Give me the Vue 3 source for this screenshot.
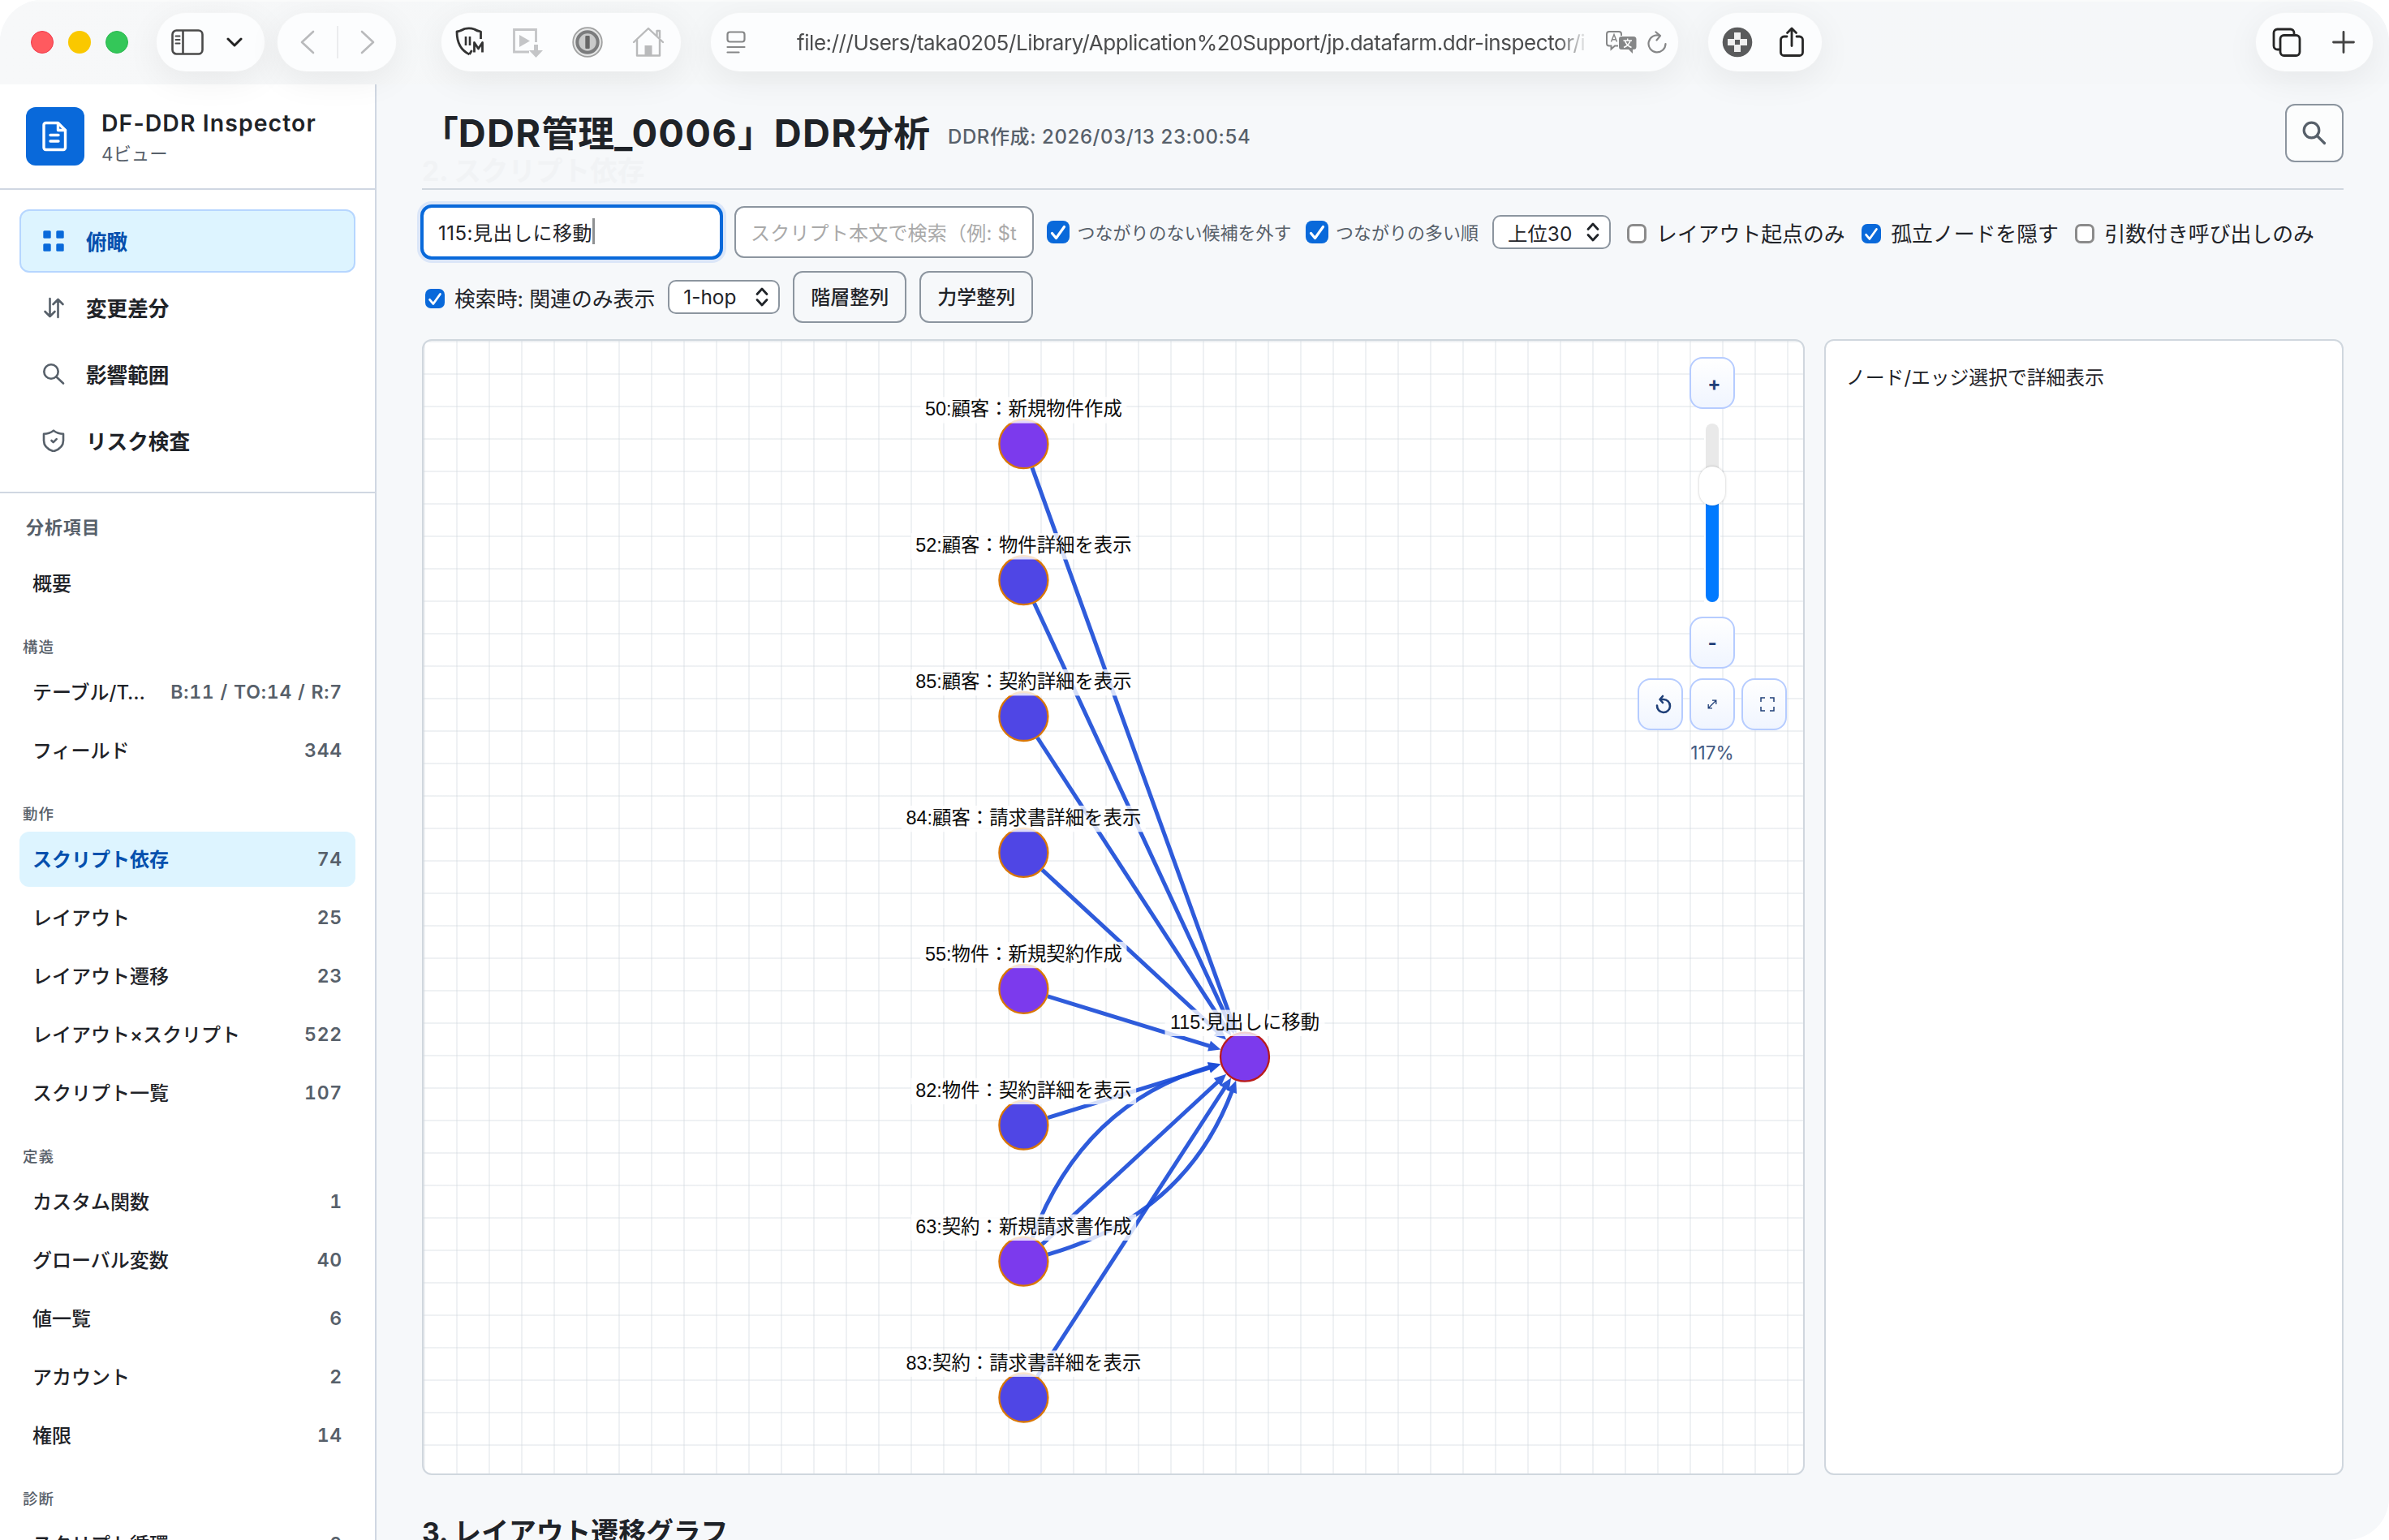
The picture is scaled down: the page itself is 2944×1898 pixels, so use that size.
<script setup>
const views = [
  { name: '俯瞰', icon: 'grid', active: true },
  { name: '変更差分', icon: 'diff' },
  { name: '影響範囲', icon: 'search' },
  { name: 'リスク検査', icon: 'shield' },
]

const groups = [
  { title: '', items: [{ name: '概要', count: '' }] },
  {
    title: '構造',
    items: [
      { name: 'テーブル/T…', count: 'B:11 / TO:14 / R:7' },
      { name: 'フィールド', count: '344' },
    ],
  },
  {
    title: '動作',
    items: [
      { name: 'スクリプト依存', count: '74', active: true },
      { name: 'レイアウト', count: '25' },
      { name: 'レイアウト遷移', count: '23' },
      { name: 'レイアウト×スクリプト', count: '522' },
      { name: 'スクリプト一覧', count: '107' },
    ],
  },
  {
    title: '定義',
    items: [
      { name: 'カスタム関数', count: '1' },
      { name: 'グローバル変数', count: '40' },
      { name: '値一覧', count: '6' },
      { name: 'アカウント', count: '2' },
      { name: '権限', count: '14' },
    ],
  },
  { title: '診断', items: [{ name: 'スクリプト循環', count: '0' }] },
]

// Graph coordinates are relative to the inner corner of the canvas panel.
const NAVY = '#4f46e5'
const VIOLET = '#7c3aed'
const R = 30
const FONT = 23.4
const target = { x: 1012, y: 882.6, label: '115:見出しに移動', fill: VIOLET, stroke: '#b91c1c' }
const callers = [
  ['50:顧客：新規物件作成', VIOLET],
  ['52:顧客：物件詳細を表示', NAVY],
  ['85:顧客：契約詳細を表示', NAVY],
  ['84:顧客：請求書詳細を表示', NAVY],
  ['55:物件：新規契約作成', VIOLET],
  ['82:物件：契約詳細を表示', NAVY],
  ['63:契約：新規請求書作成', VIOLET],
  ['83:契約：請求書詳細を表示', NAVY],
].map(([label, fill], i) => ({ x: 739.4, y: 127.2 + i * 167.9, label, fill, stroke: '#d97706' }))
const nodes = [...callers, target]

function labelWidth(text) {
  let w = 0
  for (const c of text) w += c === ':' ? 0.278 : /\d/.test(c) ? 0.556 : 1
  return w * FONT + 11
}

function toward(from, to, dist) {
  const dx = to.x - from.x
  const dy = to.y - from.y
  const len = Math.hypot(dx, dy)
  return { x: from.x + (dx / len) * dist, y: from.y + (dy / len) * dist }
}

function makeEdge(source, bend) {
  const dx = target.x - source.x
  const dy = target.y - source.y
  const len = Math.hypot(dx, dy)
  const c = {
    x: (source.x + target.x) / 2 + (dy / len) * bend,
    y: (source.y + target.y) / 2 - (dx / len) * bend,
  }
  const a = toward(source, c, R + 1)
  const tip = toward(target, c, R + 1)
  const back = toward(target, c, R + 14)
  const base = toward(target, c, R + 16)
  const nx = ((tip.y - base.y) / 15) * 6.6
  const ny = (-(tip.x - base.x) / 15) * 6.6
  return {
    d: `M${a.x} ${a.y}Q${c.x} ${c.y} ${back.x} ${back.y}`,
    head: `${tip.x},${tip.y} ${base.x + nx},${base.y + ny} ${base.x - nx},${base.y - ny}`,
  }
}

const edges = callers.map((n) => makeEdge(n, 0))
edges.push(makeEdge(callers[6], 93.6), makeEdge(callers[6], -93.6))
</script>

<template>
  <div class="window">
    <header class="chrome">
      <div class="lights"><i class="red"></i><i class="yellow"></i><i class="green"></i></div>

      <div class="pill p-side">
        <svg width="40" height="32" viewBox="0 0 40 32" fill="none" stroke="#4a4a4a" stroke-width="2.6">
          <rect x="1.5" y="1.5" width="37" height="29" rx="5" /><path d="M14.5 2v28" />
          <path d="M5.5 8.500h5M5.500 13h5M5.500 17.500h5" stroke-width="2" stroke-linecap="round" />
        </svg>
        <svg width="20" height="12" viewBox="0 0 20 12" fill="none" stroke="#222" stroke-width="3" stroke-linecap="round" stroke-linejoin="round"><path d="M2 2l8 8 8-8" /></svg>
      </div>

      <div class="pill p-nav">
        <svg width="18" height="30" viewBox="0 0 18 30" fill="none" stroke="#b9babc" stroke-width="2.6" stroke-linecap="round" stroke-linejoin="round"><path d="M16 2L2 15l14 13" /></svg>
        <i class="split"></i>
        <svg width="18" height="30" viewBox="0 0 18 30" fill="none" stroke="#b9babc" stroke-width="2.6" stroke-linecap="round" stroke-linejoin="round"><path d="M2 2l14 13L2 28" /></svg>
      </div>

      <div class="pill p-ext">
        <svg width="36" height="38" viewBox="0 0 36 38" fill="none" stroke="#333" stroke-width="2.8" stroke-linejoin="round">
          <path d="M17.500 34C9 30 2 21 2 6C5.500 5.500 9.500 3.500 11.500 2.500C15.500 1.500 19.500 1.500 23.500 3C26.500 5 29 5.500 31.500 6V15" />
          <path d="M13 12v11M18 12v11" stroke-width="2.600" />
          <path d="M17.500 34l3-5" /><path d="M23.500 31.500V19.500l5 7.500 5-7.500v12" stroke-width="2.800" />
        </svg>
        <svg width="40" height="38" viewBox="0 0 40 38" fill="none" stroke="#c4c5c7" stroke-width="2.8">
          <path d="M21 31H2.500V3.500h27V19" /><path d="M9 10v15l13-7.500z" fill="#c4c5c7" stroke="none" />
          <path d="M29.500 22v10" stroke-width="5" /><path d="M21 29h17L29.500 38z" fill="#c4c5c7" stroke="none" />
        </svg>
        <svg width="38" height="38" viewBox="0 0 38 38">
          <circle cx="19" cy="19" r="17.800" fill="#e4e5e5" stroke="#a0a1a1" stroke-width="1.800" />
          <circle cx="19" cy="19" r="12.700" fill="#c9caca" stroke="#7b7c7d" stroke-width="4" />
          <rect x="16.300" y="11" width="5.400" height="16" rx="1" fill="#666" />
        </svg>
        <svg class="home" width="40" height="38" viewBox="0 0 40 38" fill="none" stroke="#b9babb" stroke-width="2.400" stroke-linejoin="round">
          <path d="M2 19L20 2l18 17" stroke-linecap="round" /><path d="M6 16v19.500h28V16M34 14V5h-3.500v6" />
          <rect x="15.500" y="23" width="9" height="12" fill="#b9babb" stroke="none" />
        </svg>
      </div>

      <div class="pill p-url">
        <svg width="24" height="28" viewBox="0 0 24 28" fill="none" stroke="#868788" stroke-width="2.200" stroke-linecap="round">
          <rect x="1.500" y="1.500" width="21" height="12" rx="3" /><path d="M1.500 20h21M1.500 26.500h14" />
        </svg>
        <span class="url">file:///Users/taka0205/Library/Application%20Support/jp.datafarm.ddr-inspector/i</span>
        <svg class="translate" width="40" height="28" viewBox="0 0 40 28" fill="none" stroke="#858687" stroke-width="2">
          <path d="M16 18.500h-4l-4.500 4v-4H5a3 3 0 0 1-3-3V4a3 3 0 0 1 3-3h12a3 3 0 0 1 3 3v2" />
          <path d="M7.500 13.500L11 4.500l3.500 9M8.700 10.700h4.600" stroke-width="1.500" />
          <path d="M20 7h15a3.500 3.500 0 0 1 3.500 3.500v9A3.500 3.500 0 0 1 35 23h-1v5l-5-5h-9a3 3 0 0 1-3-3V10a3 3 0 0 1 3-3z" fill="#858687" stroke="none" />
          <path d="M22.500 12h10.500M27.700 9.500v2.500M31 12c-1 4-4 7-8 8.500M24.500 12c1 4 4 7 8 8.500" stroke="#fff" stroke-width="1.500" />
        </svg>
        <svg width="24" height="28" viewBox="0 0 24 28" fill="none" stroke="#858687" stroke-width="2.200" stroke-linecap="round" stroke-linejoin="round">
          <path d="M22.500 16A10.500 10.500 0 1 1 15 5.800" /><path d="M10.500 1.500l5.500 4.600-4.500 5.400" />
        </svg>
      </div>

      <div class="pill p-share">
        <svg width="38" height="38" viewBox="0 0 38 38">
          <circle cx="19" cy="19" r="18.300" fill="#5a5b5c" />
          <path d="M15 7h8v8h8v8h-8v8h-8v-8H7v-8h8z" fill="#efefef" /><rect x="16" y="16" width="6" height="6" fill="#5a5b5c" />
        </svg>
        <svg width="32" height="38" viewBox="0 0 32 38" fill="none" stroke="#262626" stroke-width="2.800" stroke-linecap="round" stroke-linejoin="round">
          <path d="M10 12H6.500a4 4 0 0 0-4 4v15.500a4 4 0 0 0 4 4h19a4 4 0 0 0 4-4V16a4 4 0 0 0-4-4H22M16 23.500V2.500M10.500 7.500L16 2l5.500 5.500" />
        </svg>
      </div>

      <div class="pill p-tabs">
        <svg width="36" height="36" viewBox="0 0 36 36" fill="none" stroke="#262626" stroke-width="2.800">
          <path d="M9.500 27H6.500a4.500 4.500 0 0 1-4.500-4.500V6.500A4.500 4.500 0 0 1 6.500 2h16a4.500 4.500 0 0 1 4.500 4.500V9" />
          <rect x="10" y="9.500" width="24" height="25" rx="4.500" />
        </svg>
        <svg width="28" height="28" viewBox="0 0 28 28" stroke="#444" stroke-width="2.800" stroke-linecap="round"><path d="M14 1.500v25M1.500 14h25" /></svg>
      </div>
    </header>

    <div class="body">
      <aside class="sidebar">
        <div class="brand">
          <div class="logo">
            <svg width="32" height="38" viewBox="0 0 32 38" fill="none" stroke="#fff" stroke-width="3.400" stroke-linecap="round" stroke-linejoin="round">
              <path d="M4.500 2.500h15l9 9V33a2.500 2.500 0 0 1-2.500 2.500H4.500A2.500 2.500 0 0 1 2 33V5a2.500 2.500 0 0 1 2.500-2.500z" />
              <path d="M19.500 3v8.500h9" /><path d="M10 17.500h10M10 25h10" />
            </svg>
          </div>
          <div class="brand-text">
            <div class="brand-name">DF-DDR Inspector</div>
            <div class="brand-sub">4ビュー</div>
          </div>
        </div>

        <nav class="views">
          <div v-for="v in views" :key="v.name" class="view" :class="{ active: v.active }">
            <svg width="28" height="28" viewBox="0 0 28 28" fill="none" stroke="#57606a" stroke-width="2.600" stroke-linecap="round" stroke-linejoin="round">
              <g v-if="v.icon === 'grid'" fill="#0969da" stroke="none">
                <rect x="1.300" y="1.300" width="9.400" height="9.400" rx="1.500" /><rect x="17.300" y="1.300" width="9.400" height="9.400" rx="1.500" />
                <rect x="1.300" y="17.300" width="9.400" height="9.400" rx="1.500" /><rect x="17.300" y="17.300" width="9.400" height="9.400" rx="1.500" />
              </g>
              <path v-else-if="v.icon === 'diff'" d="M9.500 3v22M3.500 19l6 6 6-6M19.500 26V4M13.500 10l6-6 6 6" />
              <g v-else-if="v.icon === 'search'"><circle cx="11" cy="11" r="8.700" /><path d="M17.500 17.500l8.500 8" /></g>
              <g v-else><path d="M14 1.700c4 3 8 4 12 4V14c0 6.500-5 11-12 13.200C7 25 2 20.500 2 14V5.700c4 0 8-1 12-4z" /><path d="M11.500 14l2.200 2.200 4-4" /></g>
            </svg>
            <span>{{ v.name }}</span>
          </div>
        </nav>

        <div class="toc">
          <div class="toc-title">分析項目</div>
          <section v-for="g in groups" :key="g.title">
            <div v-if="g.title" class="group-title">{{ g.title }}</div>
            <div class="rows">
              <div v-for="it in g.items" :key="it.name" class="row" :class="{ active: it.active }">
                <span>{{ it.name }}</span><b>{{ it.count }}</b>
              </div>
            </div>
          </section>
        </div>
      </aside>

      <main class="main">
        <div class="page-head">
          <div class="ghost">2. スクリプト依存</div>
          <h1>「<span>DDR</span>管理<span>_0006</span>」<span>DDR</span>分析</h1>
          <div class="stamp">DDR作成: 2026/03/13 23:00:54</div>
          <div class="find">
            <svg width="30" height="30" viewBox="0 0 30 30" fill="none" stroke="#57606a" stroke-width="3.200" stroke-linecap="round"><circle cx="11.500" cy="11.500" r="9.300" /><path d="M18.500 18.500l9 9" /></svg>
          </div>
        </div>

        <div class="tools">
          <div class="line">
            <div class="field focus">115:見出しに移動<i class="caret"></i></div>
            <div class="field hint"><span>スクリプト本文で検索（例: $t</span></div>
            <label class="opt muted"><i class="check big on"><svg viewBox="0 0 28 28"><path d="M6.500 15.500l5 6L21.500 7.500" /></svg></i><span>つながりのない候補を外す</span></label>
            <label class="opt muted"><i class="check big on"><svg viewBox="0 0 28 28"><path d="M6.500 15.500l5 6L21.500 7.500" /></svg></i><span>つながりの多い順</span></label>
            <div class="select">上位30<svg width="16" height="24" viewBox="0 0 16 24"><path d="M2 8.500L8 2l6 6.500M2 15.500L8 22l6-6.500" /></svg></div>
            <label class="opt gap-a"><i class="check"></i>レイアウト起点のみ</label>
            <label class="opt gap-b"><i class="check on"><svg viewBox="0 0 28 28"><path d="M6.500 15.500l5 6L21.500 7.500" /></svg></i>孤立ノードを隠す</label>
            <label class="opt gap-b"><i class="check"></i>引数付き呼び出しのみ</label>
          </div>
          <div class="line">
            <label class="opt first"><i class="check on"><svg viewBox="0 0 28 28"><path d="M6.500 15.500l5 6L21.500 7.500" /></svg></i>検索時: 関連のみ表示</label>
            <div class="select hop">1-hop<svg width="16" height="24" viewBox="0 0 16 24"><path d="M2 8.500L8 2l6 6.500M2 15.500L8 22l6-6.500" /></svg></div>
            <div class="btn">階層整列</div>
            <div class="btn">力学整列</div>
          </div>
        </div>

        <div class="panels">
          <div class="canvas">
            <svg class="graph" width="1700" height="1396" viewBox="0 0 1700 1396">
              <g v-for="(e, i) in edges" :key="'e' + i" opacity="0.92">
                <path :d="e.d" fill="none" stroke="#1d4ed8" stroke-width="5" />
                <polygon :points="e.head" fill="#1d4ed8" />
              </g>
              <g v-for="n in nodes" :key="n.label">
                <circle :cx="n.x" :cy="n.y" :r="R" :fill="n.fill" :stroke="n.stroke" stroke-width="2.300" />
                <rect :x="n.x - labelWidth(n.label) / 2" :y="n.y - 58" :width="labelWidth(n.label)" height="32.400" fill="#fff" fill-opacity="0.8" />
                <text class="node-label" :x="n.x" :y="n.y - 35" text-anchor="middle">{{ n.label }}</text>
              </g>
            </svg>

            <div class="zoom">
              <div class="zbtn plus">+</div>
              <div class="slider"><i class="rail"></i><i class="fill"></i><i class="thumb"></i></div>
              <div class="zbtn">-</div>
              <div class="zrow">
                <div class="zbtn shift">
                  <svg width="20" height="24" viewBox="0 0 20 24" fill="none" stroke="#1f3f78" stroke-width="2.600" stroke-linecap="round" stroke-linejoin="round"><path d="M2 13.500A8 8 0 1 0 10 6H6M9 2L5.500 6 9 10" /></svg>
                </div>
                <div class="zbtn">
                  <svg width="12" height="12" viewBox="0 0 12 12" fill="none" stroke="#1f3f78" stroke-width="1.300"><path d="M1.500 10.500l9-9M6 1.200h4.800V6M1.200 6v4.800H6" /></svg>
                </div>
                <div class="zbtn shift">
                  <svg width="18" height="18" viewBox="0 0 18 18" fill="none" stroke="#1f3f78" stroke-width="1.500"><path d="M1 6V1h5M12 1h5v5M17 12v5h-5M6 17H1v-5" /></svg>
                </div>
              </div>
              <div class="percent">117%</div>
            </div>
          </div>
          <div class="detail">ノード/エッジ選択で詳細表示</div>
        </div>

        <h2>3. レイアウト遷移グラフ</h2>
      </main>
    </div>
  </div>
</template>

<style>
body { margin: 0; background: #fff; overflow: hidden; }
</style>

<style scoped>
* { box-sizing: border-box; }
i { font-style: normal; }
svg { display: block; flex: none; }
.window {
  width: 2944px; height: 1898px; overflow: hidden; display: flex; flex-direction: column;
  border-radius: 52px 52px 52px 0; background: #f6f8fa; color: #1f2328;
  font-family: Inter, "Noto Sans CJK JP", sans-serif; font-size: 24px; white-space: nowrap;
}

/* browser toolbar */
.chrome {
  flex: none; height: 104px; display: flex; align-items: center; position: relative; z-index: 2;
  background: linear-gradient(90deg, #f7f8f9 0%, #f5f7f8 30%, #f5f7f9 100%); padding: 0 20px 0 38px;
  box-shadow: inset 0 2px 0 #fafbfb;
}
.lights { display: flex; gap: 18px; margin-right: 35px; }
.lights i { width: 28px; height: 28px; border-radius: 50%; }
.red { background: #ff5a5f; border: 1.500px solid #f0384a; }
.yellow { background: #fac800; }
.green { background: #34c759; border: 1px solid #2cb851; }
.pill {
  height: 72px; border-radius: 36px; background: #fcfdfe; display: flex; align-items: center; flex: none;
  box-shadow: 0 10px 44px rgba(0, 0, 0, 0.065), 0 0 2px rgba(255, 255, 255, 0.9);
}
.p-side { width: 133px; padding-left: 18px; gap: 28px; margin-right: 16px; }
.p-nav { width: 146px; padding-left: 28px; gap: 27px; margin-right: 56px; }
.split { width: 2px; height: 40px; background: #ebecee; }
.p-ext { width: 295px; padding-left: 17px; gap: 34px; margin-right: 37px; }
.home { margin-left: 2px; }
.p-url { width: 1192px; padding-left: 19px; margin-right: 37px; }
.url {
  margin-left: 63px; width: 976px; overflow: hidden; color: #4b4c4d; font-size: 26px; letter-spacing: -0.440px; line-height: 40px; padding-top: 1px;
  -webkit-mask-image: linear-gradient(90deg, #000 96%, transparent 100%); mask-image: linear-gradient(90deg, #000 96%, transparent 100%);
}
.translate { margin: 0 12px 0 20px; }
.p-share { width: 140px; padding-left: 17px; gap: 32px; margin-right: auto; }
.p-tabs { width: 144px; padding-left: 20px; gap: 38px; }

.body { flex: 1; display: flex; min-height: 0; }

/* sidebar */
.sidebar { width: 464px; flex: none; background: #fff; border-right: 2px solid #d0d7e2; height: 1794px; overflow: hidden; }
.brand { height: 130px; border-bottom: 2px solid #d0d7e2; display: flex; align-items: center; padding: 0 0 1px 32px; gap: 21px; }
.logo { width: 72px; height: 72px; border-radius: 12px; background: #0969da; display: flex; align-items: center; justify-content: center; }
.brand-text { padding-top: 3px; }
.brand-name { font-size: 28.400px; font-weight: 600; line-height: 38px; letter-spacing: 1.100px; }
.brand-sub { font-size: 22.400px; color: #57606a; line-height: 32px; margin-top: 3px; }
.views { padding: 24px; display: flex; flex-direction: column; gap: 4px; border-bottom: 2px solid #d0d7e2; }
.view { height: 78px; border: 2px solid transparent; border-radius: 12px; display: flex; align-items: center; gap: 26px; padding-left: 26px; font-size: 25.600px; font-weight: 600; }
.view span { padding-bottom: 2px; }
.view.active { background: #ddf4ff; border-color: #b6d6ff; color: #0550ae; }
.toc { padding: 0 24px; }
.toc-title { height: 77px; padding: 24px 0 0 8px; font-size: 22px; line-height: 36px; font-weight: 600; letter-spacing: 0.900px; color: #57606a; }
.group-title { height: 66px; padding: 30px 0 0 4px; font-size: 18.500px; line-height: 28px; font-weight: 500; letter-spacing: 0.900px; color: #57606a; }
.rows { display: flex; flex-direction: column; gap: 4px; }
.row { height: 68px; border-radius: 12px; padding: 0 16px; display: flex; align-items: center; justify-content: space-between; font-size: 24px; font-weight: 500; }
.row span { padding-bottom: 3px; }
.row b { font-size: 23px; font-weight: 600; color: #57606a; letter-spacing: 0.800px; font-variant-numeric: tabular-nums; }
.row.active { background: #ddf4ff; }
.row.active span { color: #0550ae; font-weight: 600; }

/* main column */
.main { flex: 1; min-width: 0; padding: 0 56px; }
.page-head { position: relative; height: 130px; border-bottom: 2px solid #d0d7de; display: flex; align-items: flex-start; padding-top: 30px; }
.ghost { position: absolute; left: 0; top: 82px; font-size: 33.600px; line-height: 50px; font-weight: 700; color: #f1f3f5; }
h1 { position: relative; margin: 0; font-size: 44.800px; line-height: 60px; font-weight: 700; }
h1 span { font-size: 47px; letter-spacing: 1.250px; }
.stamp { font-size: 24px; line-height: 32px; font-weight: 500; letter-spacing: 0.600px; color: #57606a; margin: 19px 0 0 22px; }
.find { margin-left: auto; margin-top: -6px; width: 72px; height: 72px; border: 2px solid #8c959f; border-radius: 12px; background: #fcfdfd; display: flex; align-items: center; justify-content: center; }

.tools { padding-top: 20px; display: flex; flex-direction: column; gap: 16px; }
.line { height: 64px; display: flex; align-items: center; }
.field { width: 369px; height: 64px; border: 2px solid #8c959f; border-radius: 12px; background: #fff; padding: 0 18px 2px; display: flex; align-items: center; font-size: 24px; margin-right: 16px; flex: none; }
.field.focus { border-color: #0969da; box-shadow: 0 0 0 2px #0969da, 0 0 0 6px #dbe6f8; letter-spacing: 0.500px; }
.caret { width: 3px; height: 32px; background: #8e9092; margin-left: 0; }
.hint { color: #a9a9a9; letter-spacing: 0.200px; }
.hint span { overflow: hidden; }
.opt { display: flex; align-items: center; font-size: 25.850px; flex: none; }
.opt.muted { font-size: 22px; color: #57606a; margin-right: 17px; }
.opt.muted span { padding-bottom: 3px; }
.check { width: 24px; height: 24px; border: 3px solid #8b8b8b; border-radius: 7px; background: #fff; margin: 3px 12px 0 0; flex: none; }
.check.big { width: 28px; height: 28px; border-radius: 8px; margin: 0 9.500px 0 0; }
.check.on { border: 0; background: #0969da; }
.check svg { width: 100%; height: 100%; fill: none; stroke: #fff; stroke-width: 3.200; stroke-linecap: round; stroke-linejoin: round; }
.select { width: 146px; height: 42px; border: 2px solid #8c959f; border-radius: 10px; background: #fff; display: flex; align-items: center; justify-content: space-between; padding: 0 12px 0 17px; font-size: 24.400px; flex: none; }
.select svg { fill: none; stroke: #1f2328; stroke-width: 2.800; stroke-linecap: round; stroke-linejoin: round; }
.gap-a { margin-left: 20px; }
.gap-b { margin-left: 20.500px; }
.first { margin-left: 4px; }
.hop { width: 138px; margin: 0 16px 0 16px; }
.btn { width: 140px; height: 64px; border: 2px solid #8c959f; border-radius: 12px; padding-bottom: 3px; display: flex; align-items: center; justify-content: center; font-size: 24px; font-weight: 500; margin-right: 16px; }

.panels { margin-top: 20px; display: flex; gap: 24px; }
.canvas {
  position: relative; width: 1704px; height: 1400px; border: 2px solid #d0d7de; border-radius: 12px; overflow: hidden; flex: none;
  background-color: #fff; background-size: 40px 40px;
  background-image: linear-gradient(90deg, rgba(208, 215, 222, 0.35) 2px, transparent 2px), linear-gradient(rgba(208, 215, 222, 0.35) 2px, transparent 2px);
}
.detail { flex: 1; border: 2px solid #d0d7de; border-radius: 12px; background: #fff; padding: 27px 25px; font-size: 23.800px; line-height: 38px; }
.node-label { font-family: "Liberation Sans", "Noto Sans CJK JP", sans-serif; font-size: 23.400px; fill: #0c0c0c; }
.zoom { position: absolute; top: 20px; right: 20px; display: flex; flex-direction: column; align-items: center; }
.zbtn { width: 56px; height: 64px; border: 2px solid #b6ccff; border-radius: 16px; background: linear-gradient(#fff, #f0f5ff); display: flex; align-items: center; justify-content: center; color: #1f3f78; font-size: 24px; font-weight: 700; }
.zbtn.plus { padding-left: 5px; }
.zbtn.shift { padding-left: 7px; }
.slider { width: 20px; height: 220px; margin: 18px 0; background: #fff; position: relative; }
.slider i { position: absolute; }
.rail { left: 2px; width: 16px; top: 0; height: 220px; border-radius: 8px; background: #e9e9e9; }
.fill { left: 2px; width: 16px; top: 80px; bottom: 0; border-radius: 0 0 8px 8px; background: #007aff; }
.thumb { left: -6px; width: 32px; top: 53px; height: 48px; border-radius: 16px; background: #fff; box-shadow: 0 0 3px rgba(0, 0, 0, 0.25); }
.zrow { display: flex; gap: 8px; margin-top: 12px; }
.percent { margin-top: 13px; font-size: 22.600px; line-height: 30px; color: #445a82; }
h2 { margin: 46px 0 0; font-size: 33.800px; line-height: 50px; font-weight: 700; }
</style>
